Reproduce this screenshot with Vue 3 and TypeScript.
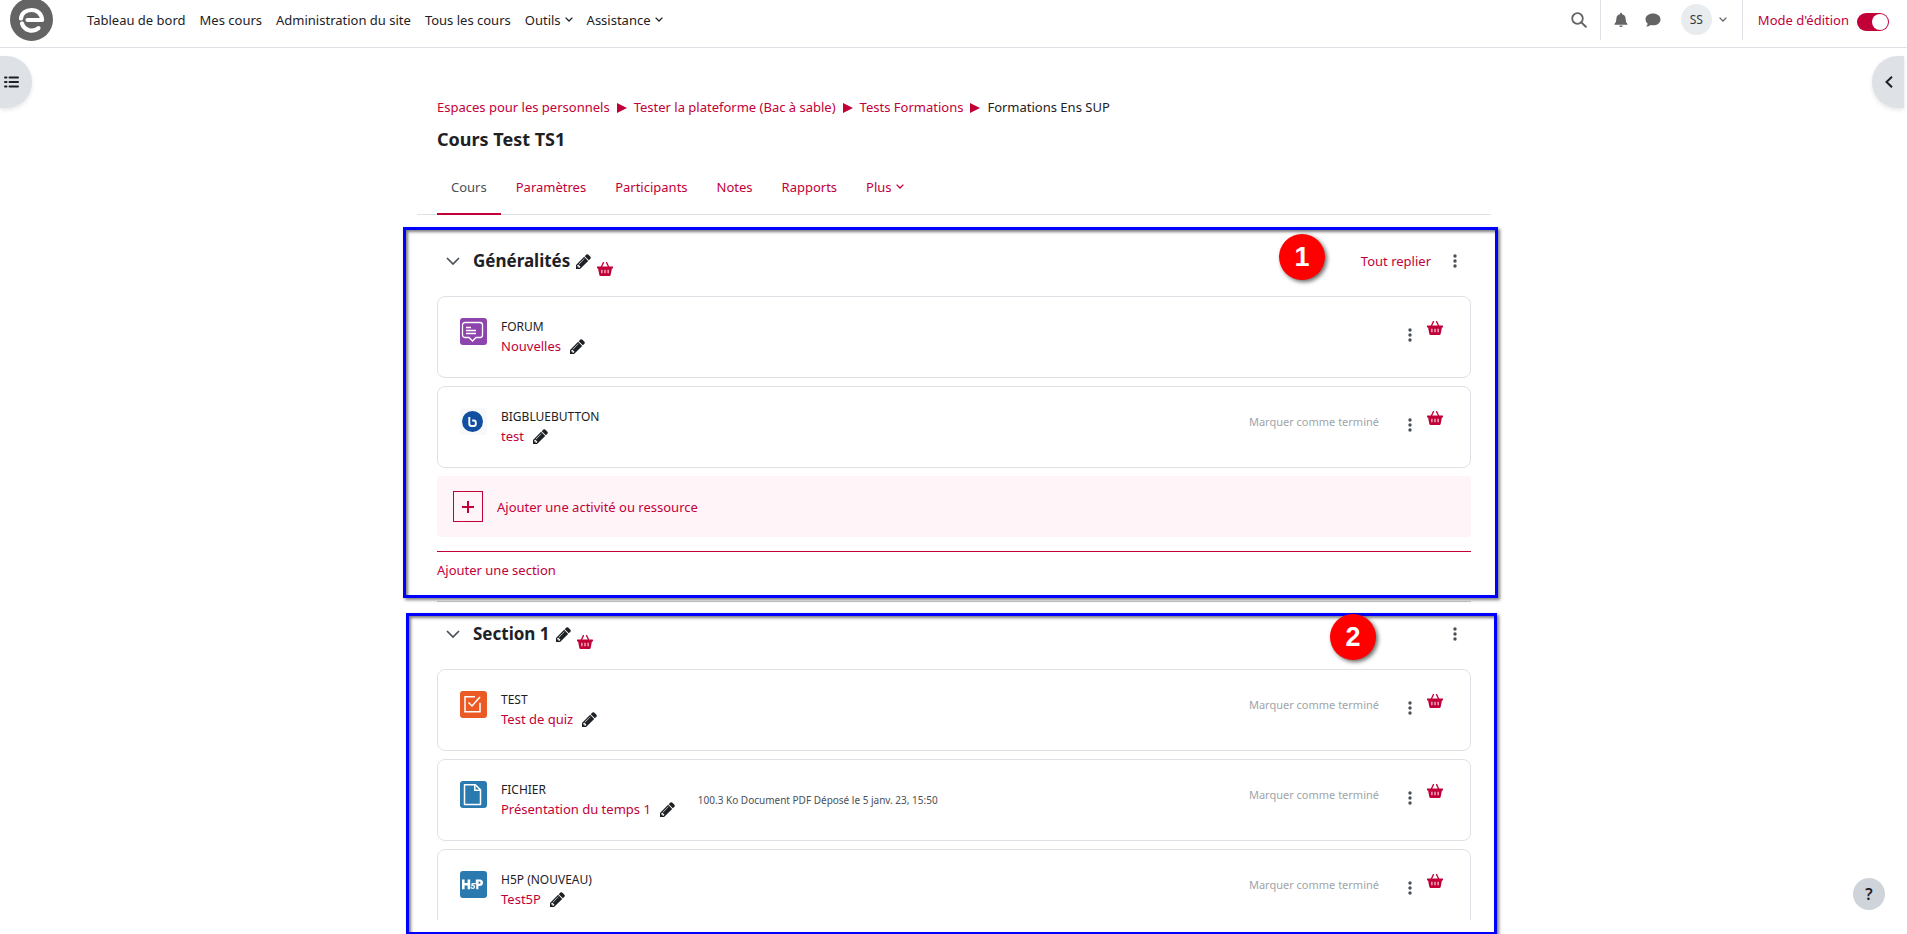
<script setup lang="ts">
interface Activity {
  icon: 'forum' | 'bbb' | 'quiz' | 'file' | 'h5p'
  type: string
  name: string
  meta?: string
  completion: boolean
}
interface Section {
  title: string
  badge: number
  first: boolean
  activities: Activity[]
}

const navLinks = ['Tableau de bord', 'Mes cours', 'Administration du site', 'Tous les cours']
const navMenus = ['Outils', 'Assistance']
const crumbs = ['Espaces pour les personnels', 'Tester la plateforme (Bac à sable)', 'Tests Formations']
const tabs = ['Cours', 'Paramètres', 'Participants', 'Notes', 'Rapports']

const sections: Section[] = [
  {
    title: 'Généralités',
    badge: 1,
    first: true,
    activities: [
      { icon: 'forum', type: 'FORUM', name: 'Nouvelles', completion: false },
      { icon: 'bbb', type: 'BIGBLUEBUTTON', name: 'test', completion: true },
    ],
  },
  {
    title: 'Section 1',
    badge: 2,
    first: false,
    activities: [
      { icon: 'quiz', type: 'TEST', name: 'Test de quiz', completion: true },
      {
        icon: 'file',
        type: 'FICHIER',
        name: 'Présentation du temps 1',
        meta: '100.3 Ko Document PDF Déposé le 5 janv. 23, 15:50',
        completion: true,
      },
      { icon: 'h5p', type: 'H5P (NOUVEAU)', name: 'Test5P', completion: true },
    ],
  },
]
</script>

<template>
  <div class="page">
    <svg class="sprite" aria-hidden="true">
      <symbol id="pencil" viewBox="128 128 1536 1536">
        <path d="M491 1536l91-91-235-235-91 91v107h128v128h107zm523-928q0-22-22-22-10 0-17 7l-542 542q-7 7-7 17 0 22 22 22 10 0 17-7l542-542q7-7 7-17zm-54-192l416 416-832 832h-416v-416l832-832zm683 96q0 53-37 90l-166 166-416-416 166-165q36-38 90-38 53 0 91 38l235 234q37 39 37 91z" />
      </symbol>
      <symbol id="basket" viewBox="0 0 16 14">
        <path d="M4.2 5.2 6.4.6M11.8 5.2 9.6.6" fill="none" stroke="currentColor" stroke-width="1.3" stroke-linecap="round" />
        <path fill-rule="evenodd" d="M.6 4.6h14.8a.7.7 0 0 1 0 1.9h-.5l-1.2 6.2q-.2 1.3-1.4 1.3H3.7q-1.2 0-1.4-1.3L1.1 6.5H.6a.7.7 0 0 1 0-1.9zM4.4 7.7v3.6h1V7.7zM7.5 7.7v3.6h1V7.7zM10.6 7.7v3.6h1V7.7z" />
      </symbol>
      <symbol id="dots" viewBox="0 0 4 14">
        <circle cx="2" cy="2" r="1.7" /><circle cx="2" cy="7" r="1.7" /><circle cx="2" cy="12" r="1.7" />
      </symbol>
      <symbol id="down" viewBox="0 0 14 8">
        <path d="M1 1l6 6 6-6" fill="none" stroke="currentColor" stroke-width="1.7" />
      </symbol>
      <symbol id="caret" viewBox="0 0 8 5">
        <path d="M.6.6 4 4 7.400.6" fill="none" stroke="currentColor" stroke-width="1.3" />
      </symbol>
    </svg>

    <header class="topbar">
      <a href="#" class="logo" aria-label="Accueil">
        <svg viewBox="0 0 43 43" width="43" height="43">
          <circle cx="21.5" cy="21.5" r="21.5" fill="#646464" />
          <path d="M11 20.500C11.800 15 16 12 21.500 12c6 0 10.300 4 10.600 10H17.500" fill="none" stroke="#fff" stroke-width="4.200" stroke-linejoin="round" stroke-linecap="round" />
          <path d="M12 25.500a10.300 10.300 0 0 0 16.500 4.700" fill="none" stroke="#fff" stroke-width="4.200" stroke-linecap="round" />
        </svg>
      </a>
      <nav class="mainnav">
        <a v-for="l in navLinks" :key="l" href="#">{{ l }}</a>
        <button v-for="m in navMenus" :key="m" type="button">{{ m }}<svg class="caret"><use href="#caret" /></svg></button>
      </nav>
      <div class="tools">
        <button type="button" class="search" aria-label="Rechercher">
          <svg viewBox="0 0 16 16" width="16" height="16"><circle cx="6.5" cy="6.5" r="5.300" fill="none" stroke="currentColor" stroke-width="1.8" /><path d="M10.400 10.400 14.800 14.800" stroke="currentColor" stroke-width="2" stroke-linecap="round" /></svg>
        </button>
        <button type="button" class="bell" aria-label="Notifications">
          <svg viewBox="0 0 14 16" width="14" height="16"><path d="M7 .8a1 1 0 0 1 1 1v.4q3.600.7 3.600 4.600 0 3.400 1.900 5.200v.8H.5V12q1.900-1.800 1.900-5.200 0-3.900 3.600-4.600v-.4a1 1 0 0 1 1-1zM5.200 13.400h3.600q-.3 1.600-1.800 1.600t-1.800-1.600z" /></svg>
        </button>
        <button type="button" class="chat" aria-label="Messages">
          <svg viewBox="0 0 16 14" width="16" height="14"><path d="M8 .5c4.300 0 7.500 2.600 7.500 5.900S12.300 12.300 8 12.300q-1.200 0-2.300-.3-2 1.500-4.700 1.600 1.400-1.200 1.700-2.900Q.5 8.900.5 6.400C.5 3.100 3.700.5 8 .5z" /></svg>
        </button>
        <button type="button" class="user"><span class="avatar">SS</span><svg class="caret"><use href="#caret" /></svg></button>
        <label class="editing">Mode d'édition<input type="checkbox" checked /></label>
      </div>
    </header>

    <button type="button" class="drawer left" aria-label="Ouvrir l'index du cours">
      <svg viewBox="0 0 15 12" width="15" height="12"><path d="M1 1.500h1.500M1 6h1.500M1 10.500h1.500M5.500 1.500H14M5.500 6H14M5.500 10.500H14" fill="none" stroke="currentColor" stroke-width="2" stroke-linecap="round" /></svg>
    </button>
    <button type="button" class="drawer right" aria-label="Ouvrir le tiroir des blocs">
      <svg viewBox="0 0 8 12" width="8" height="12"><path d="M7 .7 1.500 6 7 11.300" fill="none" stroke="currentColor" stroke-width="2" /></svg>
    </button>

    <main>
      <nav class="crumbs" aria-label="Fil d'Ariane">
        <template v-for="c in crumbs" :key="c">
          <a href="#">{{ c }}</a><svg class="arrow" viewBox="0 0 10 10"><path d="M0 0l10 5L0 10z" /></svg>
        </template>
        <span>Formations Ens SUP</span>
      </nav>
      <h1>Cours Test TS1</h1>
      <nav class="tabs">
        <a v-for="(t, i) in tabs" :key="t" href="#" :class="{ active: i === 0 }">{{ t }}</a>
        <a href="#">Plus<svg class="caret"><use href="#caret" /></svg></a>
      </nav>

      <template v-for="s in sections" :key="s.title">
        <section class="frame" :class="s.first ? 'general' : 'rest'">
          <span class="badge">{{ s.badge }}</span>
          <div class="head">
            <button type="button" class="fold" aria-label="Replier"><svg><use href="#down" /></svg></button>
            <h2>{{ s.title }}</h2>
            <button type="button" class="edit" aria-label="Modifier le titre"><svg><use href="#pencil" /></svg></button>
            <button type="button" class="basket low" aria-label="Partager la section"><svg><use href="#basket" /></svg></button>
            <a v-if="s.first" href="#" class="collapse">Tout replier</a>
            <button type="button" class="dots" aria-label="Actions de la section"><svg><use href="#dots" /></svg></button>
          </div>
          <ul class="cards">
            <li v-for="a in s.activities" :key="a.name" class="card">
              <svg class="mod" viewBox="0 0 27 27">
                <g v-if="a.icon === 'forum'" fill="none" stroke="#fff">
                  <rect width="27" height="27" rx="3" fill="#8e44ad" stroke="none" />
                  <path d="M5 4.500h15a2.500 2.500 0 0 1 2.500 2.500v10a2.500 2.500 0 0 1-2.500 2.500h-4L12.500 23 9 19.500H5A2.500 2.500 0 0 1 2.500 17V7A2.500 2.500 0 0 1 5 4.500z" stroke-width="1.300" />
                  <path d="M6 9.500h5M6 12.500h10M6 15.500h10" stroke-width="1.300" />
                </g>
                <g v-else-if="a.icon === 'bbb'">
                  <rect width="27" height="27" rx="3" fill="#f8f9fa" />
                  <circle cx="12.500" cy="13.500" r="10.500" fill="#1150a0" />
                  <path d="M9.300 9v6.700q0 2.300 2.300 2.300h2.200q2 0 2-2v-1.500q0-2-2-2h-1.600" fill="none" stroke="#fff" stroke-width="1.900" />
                </g>
                <g v-else-if="a.icon === 'quiz'" fill="none" stroke="#fff">
                  <rect width="27" height="27" rx="3" fill="#eb5a24" stroke="none" />
                  <path d="M15 5.700H5v15h15v-9" stroke-width="1.500" />
                  <path d="M8.500 11.500l3.500 3.500 8-9" stroke-width="1.500" />
                </g>
                <g v-else-if="a.icon === 'file'" fill="none" stroke="#fff">
                  <rect width="27" height="27" rx="3" fill="#2a7ab0" stroke="none" />
                  <path d="M4.500 3.700h10.800l5.200 5.200v14.600h-16z" stroke-width="1.500" stroke-linejoin="round" />
                  <path d="M14.800 4v5.300H20" stroke-width="1.500" />
                </g>
                <g v-else fill="#fff">
                  <rect width="27" height="27" rx="3" fill="#2a7ab0" />
                  <path d="M2 8.500h2.600v3.500h3V8.500h2.600v9.800H7.600v-3.800h-3v3.800H2z" />
                  <path d="M15.800 12.600h-3.600l-.3 2q2.600-.6 2.600 1.100 0 1.600-1.900 1.600-1.400 0-1.800-1" fill="none" stroke="#fff" stroke-width="1.200" />
                  <path fill-rule="evenodd" d="M15.800 8.500h4q3.200.2 3.200 3.200t-3.200 3.200h-1.400v3.400h-2.200v-5h-.4zM18.500 10.600v2.200h1q1 0 1-1.100t-1-1.100z" />
                </g>
              </svg>
              <div class="info">
                <span class="type">{{ a.type }}</span>
                <div class="name">
                  <a href="#">{{ a.name }}</a>
                  <button type="button" class="edit" aria-label="Modifier le nom"><svg><use href="#pencil" /></svg></button>
                </div>
              </div>
              <span v-if="a.meta" class="meta">{{ a.meta }}</span>
              <div class="actions">
                <button v-if="a.completion" type="button" class="mark">Marquer comme terminé</button>
                <button type="button" class="dots" aria-label="Actions"><svg><use href="#dots" /></svg></button>
                <button type="button" class="basket" aria-label="Partager"><svg><use href="#basket" /></svg></button>
              </div>
            </li>
          </ul>
          <template v-if="s.first">
            <button type="button" class="add">
              <span class="plus"><svg viewBox="0 0 12 12" width="12" height="12"><path d="M6 0v12M0 6h12" stroke="currentColor" stroke-width="2" /></svg></span>
              Ajouter une activité ou ressource
            </button>
            <div class="addsection"><a href="#">Ajouter une section</a></div>
          </template>
        </section>
        <hr v-if="s.first" />
      </template>
    </main>

    <button type="button" class="help" aria-label="Aide">?</button>
  </div>
</template>

<style>
body {
  margin: 0;
  background: #fff;
}
</style>

<style scoped>
.page {
  --red: #c20038;
  --ink: #1d2125;
  position: relative;
  display: flex;
  flex-direction: column;
  height: 100vh;
  overflow: hidden;
  color: var(--ink);
  font: 13px/20px "Noto Sans", "Open Sans", sans-serif;
}
.page *,
.page {
  box-sizing: border-box;
}
.sprite {
  position: absolute;
  width: 0;
  height: 0;
}
a {
  color: var(--red);
  text-decoration: none;
}
button {
  padding: 0;
  border: 0;
  background: none;
  font: inherit;
  color: inherit;
  cursor: pointer;
}
svg {
  display: block;
  flex: none;
  fill: currentColor;
}
.caret {
  width: 8px;
  height: 5px;
  margin-left: 4px;
}

/* top bar */
.topbar {
  display: flex;
  flex: none;
  align-items: center;
  height: 48px;
  padding: 0 18px 8px 10px;
  border-bottom: 1px solid #dee2e6;
}
.logo {
  margin-right: 34px;
}
.mainnav {
  display: flex;
  gap: 14px;
}
.mainnav a,
.mainnav button {
  display: flex;
  align-items: center;
  color: var(--ink);
}
.tools {
  display: flex;
  align-items: center;
  height: 40px;
  margin-left: auto;
  color: #646464;
}
.search {
  display: flex;
  align-items: center;
  height: 40px;
  padding-right: 13px;
  border-right: 1px solid #dee2e6;
}
.bell {
  margin-left: 13px;
}
.chat {
  margin: 0 20px 0 17px;
}
.user {
  display: flex;
  align-items: center;
  height: 40px;
  padding-right: 15px;
  border-right: 1px solid #dee2e6;
}
.user .caret {
  margin-left: 7px;
}
.avatar {
  width: 31px;
  height: 31px;
  border-radius: 50%;
  background: #e9ecef;
  color: #343a40;
  font-size: 12px;
  line-height: 31px;
}
.editing {
  display: flex;
  align-items: center;
  gap: 8px;
  padding-left: 15px;
  color: var(--red);
}
.editing input {
  appearance: none;
  display: flex;
  justify-content: flex-end;
  width: 32px;
  height: 18px;
  margin: 4px 0 0;
  padding: 1px;
  border-radius: 9px;
  background: var(--red);
}
.editing input::before {
  content: "";
  width: 16px;
  height: 16px;
  border-radius: 50%;
  background: #fff;
}

/* floating controls */
.drawer {
  position: absolute;
  top: 56px;
  display: flex;
  align-items: center;
  width: 32px;
  height: 52px;
  background: #dee2e6;
  box-shadow: 0 2px 4px rgba(0, 0, 0, 0.1);
}
.drawer.left {
  left: 0;
  padding-left: 4px;
  border-radius: 0 26px 26px 0;
}
.drawer.right {
  right: 3px;
  padding-left: 13px;
  border-radius: 26px 0 0 26px;
}
.help {
  position: absolute;
  right: 22px;
  bottom: 24px;
  width: 32px;
  height: 32px;
  border-radius: 50%;
  background: #ced4da;
  font-size: 16px;
  font-weight: 600;
}

/* course */
main {
  display: flex;
  flex: 1;
  flex-direction: column;
  width: 100%;
  max-width: 1075px;
  min-height: 0;
  margin: 0 auto;
  padding: 49px 20px 0 21px;
}
.crumbs {
  display: flex;
  align-items: center;
}
.arrow {
  width: 10px;
  height: 10px;
  margin: 2px 7px 0;
  color: var(--red);
}
h1 {
  margin: 10px 0 9px;
  font-size: 18px;
  line-height: 24px;
}
.tabs {
  display: flex;
  gap: 1px;
  height: 55px;
  flex: none;
  margin: 0 -20px;
  padding: 0 20px;
  border-bottom: 1px solid #dee2e6;
}
.tabs a {
  display: flex;
  align-items: center;
  height: 55px;
  padding: 0 14px;
  border-bottom: 2px solid transparent;
}
.tabs .active {
  color: #495057;
  border-color: var(--red);
}
.frame {
  position: relative;
  flex: none;
  border: 3px solid #0000ff;
  box-shadow: 2px 2px 3px rgba(0, 0, 0, 0.5), inset 2px 2px 3px rgba(0, 0, 0, 0.5);
}
.general {
  margin: 12px -27px 0 -34px;
  padding: 14px 24px 15px 31px;
}
.rest {
  display: flex;
  flex: 1;
  flex-direction: column;
  min-height: 0;
  margin: 0 -26px -1px -31px;
  padding: 1px 23px 12px 28px;
}
hr {
  flex: none;
  width: 100%;
  height: 1px;
  margin: 3px 0 11px;
  border: 0;
  background: #cfcfcf;
}
.badge {
  position: absolute;
  width: 46px;
  height: 46px;
  border-radius: 50%;
  background: #ff0000;
  box-shadow: 2px 2px 4px rgba(0, 0, 0, 0.6);
  color: #fff;
  font: bold 27px/46px "Liberation Sans", Arial, sans-serif;
  text-align: center;
}
.general .badge {
  top: 4px;
  right: 170px;
}
.rest .badge {
  top: -2px;
  right: 118px;
}
.head {
  display: flex;
  flex: none;
  align-items: center;
  height: 34px;
  margin-bottom: 18px;
  padding-right: 8px;
}
.fold {
  padding: 0 13px 0 9px;
  color: #495057;
}
.fold svg {
  width: 14px;
  height: 8px;
}
h2 {
  margin: 0;
  font-size: 17px;
  line-height: 24px;
}
.edit {
  margin-left: 6px;
}
.edit svg {
  width: 15px;
  height: 15px;
}
.basket {
  color: var(--red);
}
.basket svg {
  width: 16px;
  height: 14px;
}
.basket.low {
  margin-left: 6px;
  padding-top: 16px;
}
.dots {
  color: #495057;
}
.dots svg {
  width: 4px;
  height: 14px;
  margin: 0 6px;
}
.head .dots {
  margin-left: auto;
}
.head .collapse {
  margin-left: auto;
}
.head .collapse + .dots {
  margin-left: 16px;
}
.cards {
  min-height: 0;
  margin: 0;
  padding: 0;
  overflow: hidden;
  list-style: none;
}
.card {
  display: flex;
  align-items: flex-start;
  height: 82px;
  padding: 21px 27px 0 22px;
  border: 1px solid #dee2e6;
  border-radius: 8px;
}
.card + .card {
  margin-top: 8px;
}
.mod {
  width: 27px;
  height: 27px;
  margin-right: 14px;
}
.type {
  display: block;
  font-size: 12px;
  line-height: 18px;
}
.name {
  display: flex;
  align-items: center;
}
.name .edit {
  margin-left: 9px;
}
.meta {
  margin-left: 23px;
  color: #495057;
  font-size: 10px;
  line-height: 38px;
}
.actions {
  display: flex;
  align-items: flex-start;
  margin-left: auto;
}
.mark {
  margin-right: 23px;
  color: #a0a4a8;
  font-size: 11px;
  line-height: 28px;
}
.card .dots {
  height: 34px;
  margin-right: 9px;
}
.card .basket {
  height: 20px;
}
.add {
  display: flex;
  align-items: center;
  gap: 14px;
  width: 100%;
  height: 61px;
  margin-top: 8px;
  padding: 0 16px;
  border-radius: 4px;
  background: #fff4f7;
  color: var(--red);
}
.plus {
  display: grid;
  place-items: center;
  width: 30px;
  height: 31px;
  border: 1px solid var(--red);
}
.addsection {
  margin-top: 14px;
  padding-top: 8px;
  border-top: 1px solid var(--red);
}
</style>
